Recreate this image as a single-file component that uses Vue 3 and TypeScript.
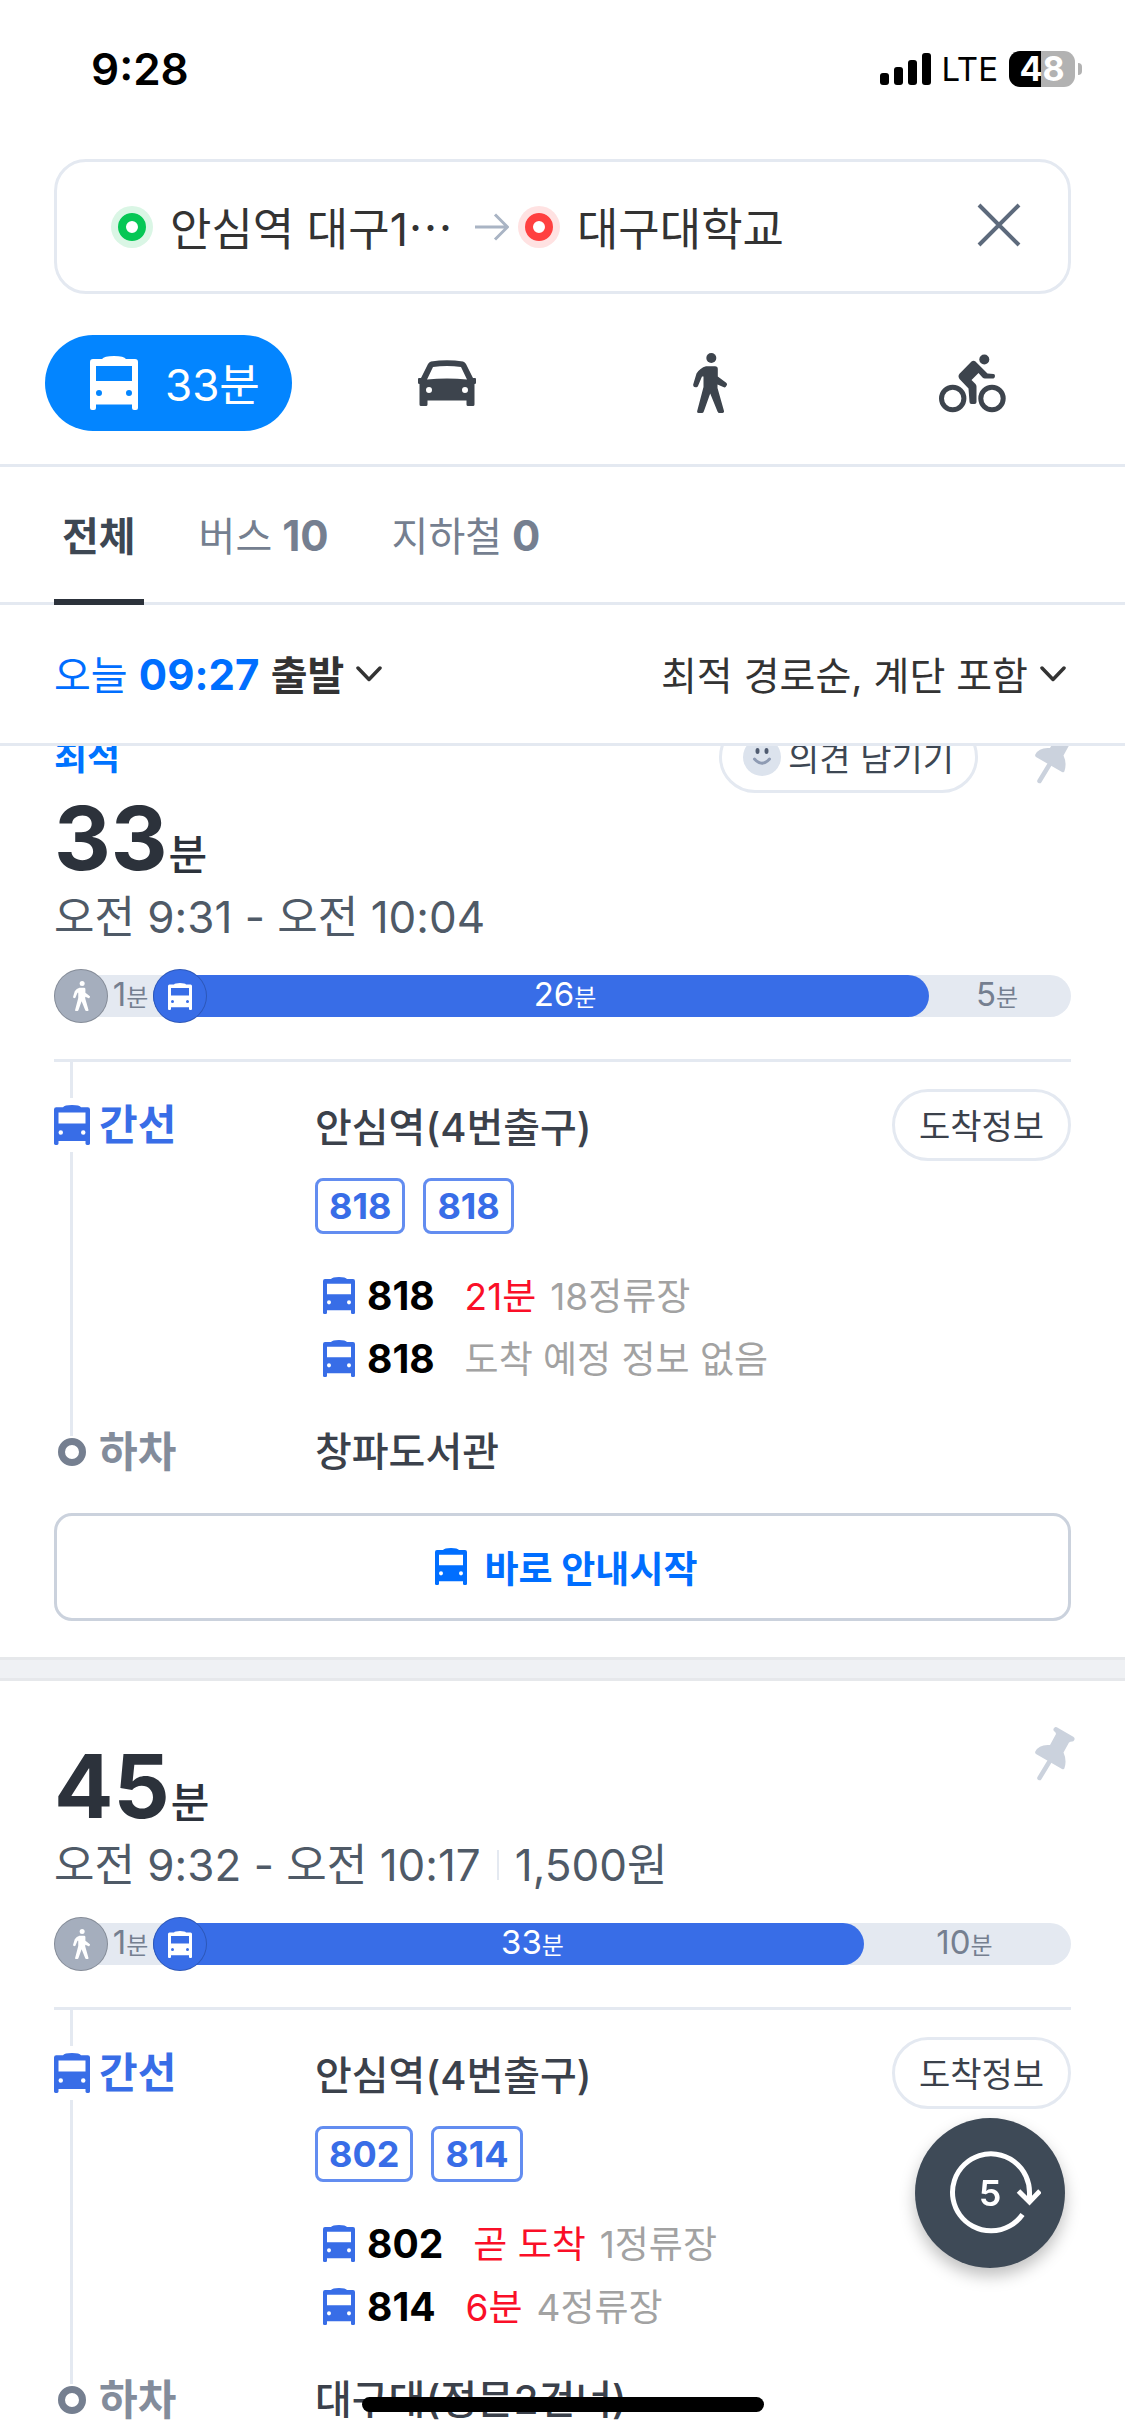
<script setup lang="ts">
import { ref } from 'vue'

interface Arrival {
  line: string
  eta?: string
  note: string
}

interface Route {
  best: boolean
  minutes: number
  period: string
  fare?: string
  walk: number
  ride: number
  rideShare: number
  rest: number
  from: string
  lines: string[]
  arrivals: Arrival[]
  to: string
}

const tabs = [
  { name: '전체', count: null },
  { name: '버스', count: 10 },
  { name: '지하철', count: 0 },
]
const activeTab = ref('전체')

const modes = [
  { icon: 'car', label: '자동차', width: 58, height: 46 },
  { icon: 'walk', label: '도보', width: 34, height: 60 },
  { icon: 'bike', label: '자전거', width: 67, height: 59 },
]

const routes: Route[] = [
  {
    best: true,
    minutes: 33,
    period: '오전 9:31 - 오전 10:04',
    walk: 1,
    ride: 26,
    rideShare: 76.3,
    rest: 5,
    from: '안심역(4번출구)',
    lines: ['818', '818'],
    arrivals: [
      { line: '818', eta: '21분', note: '18정류장' },
      { line: '818', note: '도착 예정 정보 없음' },
    ],
    to: '창파도서관',
  },
  {
    best: false,
    minutes: 45,
    period: '오전 9:32 - 오전 10:17',
    fare: '1,500원',
    walk: 1,
    ride: 33,
    rideShare: 69.9,
    rest: 10,
    from: '안심역(4번출구)',
    lines: ['802', '814'],
    arrivals: [
      { line: '802', eta: '곧 도착', note: '1정류장' },
      { line: '814', eta: '6분', note: '4정류장' },
    ],
    to: '대구대(정문2건너)',
  },
]
</script>

<template>
  <div class="app">
    <svg class="sprite" aria-hidden="true">
      <symbol id="bus" viewBox="0 0 48 54" preserveAspectRatio="none">
        <path
          fill="currentColor"
          fill-rule="evenodd"
          d="M3 3H12Q14 0 24 0T36 3H45Q48 3 48 6V52Q48 54 46 54H44Q42 54 42 52V48.5H6V52Q6 54 4 54H2Q0 54 0 52V6Q0 3 3 3ZM6 10V25H42V10ZM9 34a3 3 0 1 0 0 6a3 3 0 1 0 0-6ZM39 34a3 3 0 1 0 0 6a3 3 0 1 0 0-6Z"
        />
      </symbol>
      <symbol id="car" viewBox="0 0 58 46">
        <path
          fill="currentColor"
          fill-rule="evenodd"
          d="M13 1.5Q29-1 45 1.5Q47 2 48 4L55 18H57Q58 18 58 19V23Q58 24 56.5 24V44.500Q56.500 46 55 46H50Q48.500 46 48.500 44.500V40.500H9.500V44.500Q9.500 46 8 46H3Q1.500 46 1.500 44.500V24Q0 24 0 23V19Q0 18 1 18H3L10 4Q11 2 13 1.500ZM15 7L9 19.500Q29 17.500 49 19.500L43 7Q29 5 15 7ZM11 27a3 3 0 1 0 0 6a3 3 0 1 0 0-6ZM47 27a3 3 0 1 0 0 6a3 3 0 1 0 0-6Z"
        />
      </symbol>
      <symbol id="walk" viewBox="0 0 34 60">
        <circle cx="18.300" cy="5" r="5" fill="currentColor" />
        <path
          fill="currentColor"
          d="M13 13.300H22Q24.800 13.300 24.800 16V23.500L33.200 29.800Q34.600 31 33.600 32.600L32.800 33.800Q31.800 35 30.300 34L24.500 31.500V35L31 58Q31.300 60 29.500 60H26.500Q25 60 24.500 58.500L17.200 40.500L10.800 58.500Q10.300 60 8.800 60H5.600Q3.800 60 4.200 58L10.500 34V23.500H9L5 33Q4.400 34.500 2.800 34.200L1.300 33.900Q0 33.300 0.200 31.600L3.500 20.500Q7 15 13 13.300Z"
        />
      </symbol>
      <symbol id="bike" viewBox="0 0 67 59">
        <g fill="none" stroke="currentColor" stroke-width="5">
          <circle cx="13.700" cy="44.500" r="11.200" />
          <circle cx="53" cy="44.500" r="11.200" />
        </g>
        <circle cx="45.300" cy="5.500" r="5" fill="currentColor" />
        <path
          fill="currentColor"
          d="M32.500 7.500Q34.500 6 36.500 7.500L48.500 19.500L54.500 20Q56 20.200 56 22T54.500 24.500H46Q44.500 24.500 43.500 23.500L39.500 19L32.500 26L36.500 30Q37.500 31 37.500 32.500V48Q37.500 50 35.500 50H32.500Q30.500 50 30.500 48L29.500 34.500L20.500 25Q18.500 22 20.500 19.800Z"
        />
      </symbol>
      <symbol id="pin" viewBox="0 0 40 54">
        <g fill="none" stroke="currentColor" stroke-linecap="round">
          <path stroke-width="5" d="M21 2.600L37 12" />
          <path stroke-width="4.500" d="M16 32L4.500 51" />
        </g>
        <path
          fill="currentColor"
          d="M19.500 2L21 7L15 18Q4 17 .3 24.500Q-.3 26 1 27L27 42Q29 43 29.500 41Q32 33 28.500 25.500L34 15.500L39 13Z"
        />
      </symbol>
      <symbol id="chevron" viewBox="0 0 26 16">
        <path
          d="M2 2L13 13.500L24 2"
          fill="none"
          stroke="currentColor"
          stroke-width="3.500"
          stroke-linecap="round"
          stroke-linejoin="round"
        />
      </symbol>
    </svg>

    <header class="top">
      <div class="status">
        <span class="clock">9:28</span>
        <svg class="signal" width="51" height="32" viewBox="0 0 51 32" aria-hidden="true">
          <rect x="0" y="20" width="9" height="12" rx="3" />
          <rect x="14" y="14" width="9" height="18" rx="3" />
          <rect x="28" y="7" width="9" height="25" rx="3" />
          <rect x="42" y="0" width="9" height="32" rx="3" />
        </svg>
        <span class="network">LTE</span>
        <span class="battery">48</span>
        <span class="battery-tip"></span>
      </div>

      <div class="search">
        <button class="place" type="button"><span class="dot start"></span>안심역 대구1⋯</button>
        <svg class="arrow" width="34" height="28" viewBox="0 0 34 28" aria-hidden="true">
          <path d="M0 14H32M20 1.500L32.500 14L20 26.500" fill="none" stroke="#a9b4c4" stroke-width="3" />
        </svg>
        <button class="place" type="button"><span class="dot goal"></span>대구대학교</button>
        <button class="close" type="button" aria-label="닫기">
          <svg width="44" height="44" viewBox="0 0 44 44">
            <path d="M2 2L42 42M42 2L2 42" stroke="#5d6a7c" stroke-width="4" />
          </svg>
        </button>
      </div>

      <nav class="modes">
        <button class="mode active" type="button">
          <svg width="48" height="54"><use href="#bus" /></svg>
          <span>33분</span>
        </button>
        <button v-for="m in modes" :key="m.icon" class="mode" type="button" :aria-label="m.label">
          <svg :width="m.width" :height="m.height"><use :href="`#${m.icon}`" /></svg>
        </button>
      </nav>

      <nav class="tabs">
        <button
          v-for="t in tabs"
          :key="t.name"
          type="button"
          class="tab"
          :class="{ active: t.name === activeTab }"
          @click="activeTab = t.name"
        >
          {{ t.name }}<b v-if="t.count !== null">&nbsp;{{ t.count }}</b>
        </button>
      </nav>

      <div class="filters">
        <button type="button" class="filter">
          <span><span class="today">오늘 <b>09:27</b></span> <b>출발</b></span>
          <svg width="26" height="16"><use href="#chevron" /></svg>
        </button>
        <button type="button" class="filter sort">
          <span>최적 경로순, 계단 포함</span>
          <svg width="26" height="16"><use href="#chevron" /></svg>
        </button>
      </div>
    </header>

    <main class="results">
      <div class="list">
        <article v-for="r in routes" :key="r.minutes" class="card" :class="{ best: r.best }">
          <div v-if="r.best" class="card-head">
            <b class="best-label">최적</b>
            <button type="button" class="pill feedback">
              <svg width="38" height="38" viewBox="0 0 38 38" aria-hidden="true">
                <circle cx="19" cy="19" r="19" fill="#dce3ed" />
                <ellipse cx="14.500" cy="13" rx="2" ry="3" fill="#4f5b70" />
                <ellipse cx="23.500" cy="13" rx="2" ry="3" fill="#4f5b70" />
                <path d="M11.500 21Q19 29.500 26.500 21" fill="none" stroke="#8e9bb3" stroke-width="3" stroke-linecap="round" />
              </svg>
              <span>의견 남기기</span>
            </button>
            <button type="button" class="pin" aria-label="고정">
              <svg width="40" height="54"><use href="#pin" /></svg>
            </button>
          </div>
          <button v-else type="button" class="pin corner" aria-label="고정">
            <svg width="40" height="54"><use href="#pin" /></svg>
          </button>

          <h2 class="duration">{{ r.minutes }}<small>분</small></h2>
          <p class="period">
            <span>{{ r.period }}</span>
            <span v-if="r.fare" class="fare">{{ r.fare }}</span>
          </p>

          <div class="bar">
            <div class="seg walk">
              <span class="marker grey"><svg width="17" height="30"><use href="#walk" /></svg></span>
              <span class="seg-label">{{ r.walk }}<small>분</small></span>
            </div>
            <div class="seg ride" :style="{ width: `${r.rideShare}%` }">
              <span class="marker blue"><svg width="24" height="27"><use href="#bus" /></svg></span>
              <span class="seg-label">{{ r.ride }}<small>분</small></span>
            </div>
            <div class="seg rest">
              <span class="seg-label">{{ r.rest }}<small>분</small></span>
            </div>
          </div>

          <div class="steps">
            <div class="step board">
              <div class="rail">
                <span class="line short"></span>
                <span class="kind blue-text">
                  <svg width="36" height="40"><use href="#bus" /></svg>간선
                </span>
                <span class="line"></span>
              </div>
              <div class="detail">
                <div class="stop-row">
                  <span class="stop">{{ r.from }}</span>
                  <button type="button" class="pill"><span>도착정보</span></button>
                </div>
                <div class="badges">
                  <span v-for="(l, i) in r.lines" :key="i" class="badge">{{ l }}</span>
                </div>
                <ul class="arrivals">
                  <li v-for="(a, i) in r.arrivals" :key="i">
                    <svg width="32" height="37"><use href="#bus" /></svg>
                    <b>{{ a.line }}</b>
                    <span v-if="a.eta" class="eta">{{ a.eta }}</span>
                    <span class="note">{{ a.note }}</span>
                  </li>
                </ul>
              </div>
            </div>
            <div class="step alight">
              <span class="kind"><span class="ring"></span>하차</span>
              <span class="stop">{{ r.to }}</span>
            </div>
          </div>

          <button type="button" class="go">
            <svg width="32" height="37"><use href="#bus" /></svg>바로 안내시작
          </button>
        </article>
      </div>
    </main>

    <button type="button" class="refresh" aria-label="새로고침">
      <svg width="92" height="92" viewBox="0 0 92 92" fill="none" stroke="#fff" stroke-width="5">
        <path d="M73.500 67.500A38.500 38.500 0 1 1 80.500 46V54" />
        <path d="M69.500 44L80.500 55L91 44" />
      </svg>
      <span>5</span>
    </button>
    <div class="home"></div>
  </div>
</template>

<style>
body {
  margin: 0;
  background: #fff;
}
</style>

<style scoped>
.app {
  height: 100vh;
  display: flex;
  flex-direction: column;
  overflow: hidden;
  font-family: Inter, 'Noto Sans CJK KR', sans-serif;
  font-size: 40px;
  color: #333;
}
.sprite {
  position: absolute;
  width: 0;
  height: 0;
}
svg {
  display: block;
  flex: none;
}
button {
  border: 0;
  padding: 0;
  margin: 0;
  background: none;
  font: inherit;
  color: inherit;
  white-space: nowrap;
}
.top {
  flex: none;
}
.status {
  display: flex;
  align-items: center;
  height: 138px;
  padding: 0 43px 0 91px;
  color: #000;
}
.clock {
  flex: 1;
  font-size: 44px;
  font-weight: 600;
}
.network {
  margin: 0 11px 0 10px;
  font-size: 33px;
  line-height: 36px;
}
.battery {
  width: 66px;
  border-radius: 11px;
  background: linear-gradient(90deg, #000 0 32px, #b2b2b2 32px);
  color: #fff;
  font-size: 34px;
  font-weight: 700;
  line-height: 36px;
  text-align: center;
}
.battery-tip {
  width: 4px;
  height: 12px;
  margin-left: 3px;
  border-radius: 0 6px 6px 0;
  background: #b2b2b2;
}
.search {
  display: flex;
  align-items: center;
  box-sizing: border-box;
  height: 135px;
  margin: 21px 54px 0;
  padding: 0 47px 0 61px;
  border: 3px solid #e4e9f1;
  border-radius: 32px;
  font-size: 45px;
}
.place {
  display: flex;
  align-items: center;
}
.dot {
  width: 12px;
  height: 12px;
  margin-right: 24px;
  border: 8px solid;
  border-radius: 50%;
}
.start {
  border-color: #06c755;
  box-shadow: 0 0 0 7px #daf6e5;
}
.goal {
  border-color: #ff4040;
  box-shadow: 0 0 0 7px #ffe2e2;
}
.arrow {
  margin: 0 16px 0 22px;
}
.close {
  margin-left: auto;
  padding-bottom: 3px;
}
.modes {
  display: flex;
  padding: 41px 21px 33px 45px;
  border-bottom: 3px solid #e4e9f1;
  font-size: 44px;
  color: #3d444d;
}
.mode {
  flex: 1;
  display: flex;
  align-items: center;
  justify-content: center;
  height: 96px;
}
.mode.active {
  flex: none;
  justify-content: flex-start;
  box-sizing: border-box;
  width: 247px;
  margin-right: 24px;
  padding-left: 45px;
  gap: 27px;
  border-radius: 48px;
  background: #0385ff;
  color: #fff;
}
.mode span {
  padding-bottom: 3px;
}
.tabs {
  display: flex;
  gap: 47px;
  height: 135px;
  padding: 0 54px;
  border-bottom: 3px solid #e4e9f1;
  color: #757f90;
}
.tab {
  height: 138px;
  padding: 0 8px 4px;
  box-sizing: border-box;
}
.tab b {
  font-size: 42px;
}
.tab.active {
  border-top: 6px solid transparent;
  border-bottom: 6px solid #2c323b;
  color: #3d4753;
  font-weight: 700;
}
.filters {
  display: flex;
  align-items: center;
  justify-content: space-between;
  height: 138px;
  padding: 0 59px 0 54px;
  border-bottom: 3px solid #e4e9f1;
}
.filter {
  display: flex;
  align-items: center;
  gap: 12px;
}
.filter span {
  padding-bottom: 2px;
}
.today b {
  font-size: 42px;
}
.sort {
  font-size: 39px;
}
.today {
  color: #006eff;
}
.results {
  flex: 1;
  min-height: 0;
  overflow: hidden;
}
/* the list is scrolled slightly under the header */
.list {
  margin-top: -25px;
}
.card {
  position: relative;
  padding: 60px 54px 36px;
}
.card.best {
  padding-top: 0;
}
.card:not(:last-child)::after {
  content: '';
  display: block;
  height: 18px;
  margin: 36px -54px -36px;
  border: solid #e6e8eb;
  border-width: 3px 0;
  background: #eff1f4;
}
.card-head {
  display: flex;
  align-items: center;
  height: 72px;
}
.best-label {
  flex: 1;
  padding-bottom: 6px;
  font-size: 36px;
  color: #0073ff;
}
.pill {
  display: flex;
  align-items: center;
  box-sizing: border-box;
  height: 72px;
  padding: 0 24px;
  border: 3px solid #e4e9f1;
  border-radius: 36px;
  color: #3b414b;
  font-size: 34px;
}
.pill span {
  padding-bottom: 2px;
}
.feedback {
  gap: 7px;
  padding: 0 21px;
  color: #3d4753;
}
.pin {
  margin: 0 -4px 0 57px;
  color: #cbd2dd;
}
.pin.corner {
  position: absolute;
  top: 46px;
  right: 54px;
}
.duration {
  height: 90px;
  margin: 0;
  font-size: 88px;
  line-height: 90px;
  color: #2c323b;
}
.duration small {
  margin-left: 1px;
  font-size: 42px;
  font-weight: 500;
}
.period {
  display: flex;
  align-items: center;
  margin: 4px 0 22px;
  font-size: 44px;
  line-height: 60px;
  color: #4f5a67;
}
.fare {
  margin-left: 16px;
  padding-left: 18px;
  background: linear-gradient(#e4e9f1, #e4e9f1) 0 50% / 2px 30px no-repeat;
}
.bar {
  display: flex;
  height: 42px;
  margin: 28px 0 42px;
  border-radius: 21px;
  background: #e4e9f1;
  color: #757f90;
  font-size: 33px;
}
.seg {
  display: flex;
  align-items: center;
}
.walk {
  width: 99px;
}
.ride,
.rest {
  box-sizing: border-box;
  padding-right: 6px;
}
.ride {
  border-radius: 21px;
  background: #386de7;
  color: #fff;
}
.rest {
  flex: 1;
}
.seg-label {
  flex: 1;
  text-align: center;
  line-height: 42px;
}
.seg-label small {
  font-size: 24px;
}
.marker {
  display: flex;
  align-items: center;
  justify-content: center;
  flex: none;
  box-sizing: border-box;
  width: 54px;
  height: 54px;
  border: 1px solid #00000033;
  border-radius: 50%;
  color: #fff;
}
.grey {
  background: #a5aebd;
}
.blue {
  background: #386de7;
}
.steps {
  border-top: 3px solid #e4e9f1;
}
.step {
  display: grid;
  grid-template-columns: 261px 1fr;
}
.rail {
  display: flex;
  flex-direction: column;
}
.line {
  flex: 1;
  width: 3px;
  margin-left: 16px;
  background: #e4e9f1;
}
.line.short {
  flex: none;
  height: 36px;
}
.kind {
  display: flex;
  align-items: center;
  gap: 9px;
  height: 54px;
  font-size: 42px;
  line-height: 50px;
  font-weight: 700;
  color: #838c9b;
}
.blue-text {
  color: #386de7;
}
.detail {
  padding: 27px 0 46px;
}
.stop-row {
  display: flex;
  align-items: center;
  justify-content: space-between;
}
.stop {
  font-weight: 500;
  color: #3b414b;
}
.badges {
  display: flex;
  gap: 18px;
  margin: 17px 0 30px;
}
.badge {
  padding: 0 11px;
  border: 3px solid #638df0;
  border-radius: 8px;
  color: #386de7;
  font-size: 36px;
  font-weight: 700;
  line-height: 50px;
}
.arrivals {
  margin: 0;
  padding: 0;
  list-style: none;
}
.arrivals li {
  display: flex;
  align-items: center;
  height: 63px;
  padding-left: 8px;
  font-size: 37px;
}
.arrivals svg {
  color: #386de7;
}
.arrivals b {
  margin: 0 30px 0 12px;
  font-size: 39px;
  color: #000;
}
.arrivals span {
  padding-bottom: 3px;
}
.eta {
  margin-right: 14px;
  color: #fa0f28;
}
.note {
  color: #a2a2a2;
}
.alight .kind,
.alight .stop {
  height: 32px;
  line-height: 32px;
}
.ring {
  width: 14px;
  height: 14px;
  margin: 0 4px;
  border: 7px solid #757f90;
  border-radius: 50%;
}
.go {
  display: flex;
  align-items: center;
  justify-content: center;
  gap: 17px;
  box-sizing: border-box;
  width: 100%;
  height: 108px;
  margin-top: 45px;
  padding: 0 0 1px 8px;
  border: 3px solid #cbd2dd;
  border-radius: 18px;
  font-size: 37px;
  font-weight: 700;
  color: #006eff;
}
.refresh {
  position: fixed;
  right: 60px;
  bottom: 168px;
  display: grid;
  place-items: center;
  width: 150px;
  height: 150px;
  border-radius: 50%;
  background: #3e4a57;
  box-shadow: 0 8px 16px #00000040;
  color: #fff;
  font-size: 36px;
  font-weight: 600;
}
.refresh > * {
  grid-area: 1 / 1;
}
.refresh svg {
  margin-left: 9px;
}
.home {
  position: fixed;
  bottom: 24px;
  left: 50%;
  width: 402px;
  height: 15px;
  margin-left: -201px;
  border-radius: 8px;
  background: #000;
}
</style>
